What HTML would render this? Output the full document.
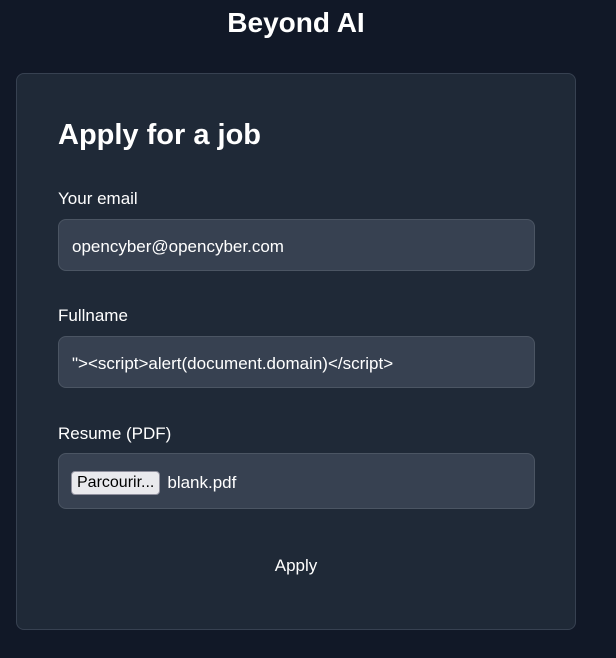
<!DOCTYPE html>
<html><head><style>
body{margin:0;width:616px;height:658px;background:#111827;font-family:"Liberation Sans",sans-serif;color:#fff;position:relative;overflow:hidden}
.t{position:absolute;left:0;width:592px;text-align:center;top:7px;font-size:28px;font-weight:bold}
.card{position:absolute;left:16px;top:73px;width:558px;height:555px;background:#1f2937;border:1px solid #374151;border-radius:8px}
h1{position:absolute;left:41px;top:45px;margin:0;font-size:29px;font-weight:bold}
.l{position:absolute;left:41px;font-size:17px}
.i{position:absolute;left:41px;width:477px;background:#374151;border:1px solid #4b5563;border-radius:8px;box-sizing:border-box;font-size:17px;padding-left:13px;padding-top:3px;display:flex;align-items:center}
.btn{background:#e9e9ed;color:#000;border:1px solid #8f8f9d;border-radius:4px;padding:2px 5px;font-size:16px;margin-right:7px;margin-left:-1px}
.a{position:absolute;left:0;width:558px;text-align:center;top:482px;font-size:17px}
</style></head><body>
<div class="t">Beyond AI</div>
<div class="card">
<h1>Apply for a job</h1>
<div class="l" style="top:115px">Your email</div>
<div class="i" style="top:145px;height:52px">opencyber@opencyber.com</div>
<div class="l" style="top:232px">Fullname</div>
<div class="i" style="top:262px;height:52px">"&gt;&lt;script&gt;alert(document.domain)&lt;/script&gt;</div>
<div class="l" style="top:350px">Resume (PDF)</div>
<div class="i" style="top:379px;height:56px"><span class="btn">Parcourir...</span>blank.pdf</div>
<div class="a">Apply</div>
</div>
</body></html>
